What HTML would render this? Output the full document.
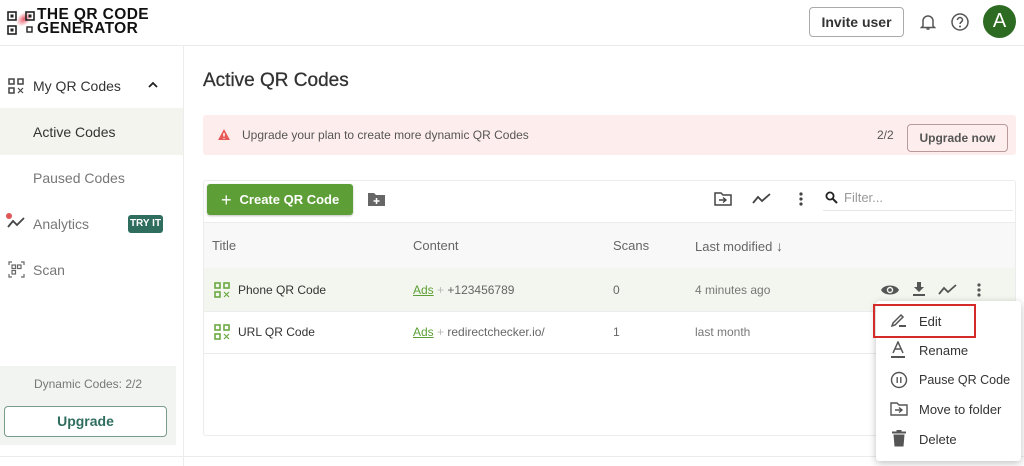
<!DOCTYPE html>
<html><head><meta charset="utf-8"><style>
*{box-sizing:border-box;margin:0;padding:0}
body{width:1024px;height:466px;overflow:hidden;background:#fff;font-family:"Liberation Sans",Arial,sans-serif;color:#333;position:relative}
.a{position:absolute}
.t{font-size:13px;white-space:nowrap}
.g{color:#666}
</style></head><body>
<!-- header -->
<div class="a" style="left:0;top:45px;width:1024px;height:1px;background:#ececec"></div>
<svg class="a" style="left:7px;top:9px" width="28" height="26" viewBox="0 0 28 26">
<defs><radialGradient id="r"><stop offset="0" stop-color="#e85a6a"/><stop offset="1" stop-color="#e85a6a" stop-opacity="0"/></radialGradient></defs>
<ellipse cx="17" cy="10" rx="9" ry="6" fill="url(#r)" transform="rotate(-40 17 10)"/>
<rect x="1" y="3" width="8" height="8" fill="none" stroke="#222" stroke-width="1.6"/><rect x="3.5" y="5.5" width="3" height="3" fill="#222"/>
<rect x="19" y="3" width="8" height="8" fill="none" stroke="#222" stroke-width="1.6"/><rect x="21.5" y="5.5" width="3" height="3" fill="#222"/>
<rect x="1" y="17" width="8" height="8" fill="none" stroke="#222" stroke-width="1.6"/><rect x="3.5" y="19.5" width="3" height="3" fill="#222"/>
<rect x="20" y="18" width="5" height="5" fill="none" stroke="#222" stroke-width="1.4"/>
</svg>
<div class="a" style="left:37px;top:8px;font-weight:bold;font-size:15.5px;line-height:14px;color:#111;letter-spacing:0.4px">THE QR CODE<br>GENERATOR</div>
<div class="a" style="left:809px;top:7px;width:95px;height:30px;border:1px solid #aaa;border-radius:4px;font-size:14px;font-weight:bold;color:#333;text-align:center;line-height:28px">Invite user</div>
<svg class="a" style="left:918px;top:12px" width="20" height="20" viewBox="0 0 20 20"><path d="M5 14V9a5 5 0 0110 0v5l1.5 1.5h-13z M8.5 17h3" fill="none" stroke="#555" stroke-width="1.5"/></svg>
<svg class="a" style="left:950px;top:12px" width="20" height="20" viewBox="0 0 20 20"><circle cx="10" cy="10" r="8" fill="none" stroke="#555" stroke-width="1.5"/><path d="M7.5 8a2.5 2.5 0 115 0c0 2-2.5 2-2.5 4" fill="none" stroke="#555" stroke-width="1.5"/><circle cx="10" cy="14.5" r="1" fill="#555"/></svg>
<div class="a" style="left:983px;top:5px;width:33px;height:33px;border-radius:50%;background:#2e6b22;color:#fff;font-size:20px;text-align:center;line-height:33px">A</div>
<!-- sidebar -->
<div class="a" style="left:183px;top:46px;width:1px;height:420px;background:#ececec"></div>
<div class="a" style="left:0;top:456px;width:1024px;height:1px;background:#ececec"></div>
<svg class="a" style="left:8px;top:78px" width="16" height="16" viewBox="0 0 16 16"><g fill="none" stroke="#444" stroke-width="1.5"><rect x="1" y="1" width="5" height="5"/><rect x="10" y="1" width="5" height="5"/><rect x="1" y="10" width="5" height="5"/></g><path d="M10 10l5 5M15 10l-5 5" stroke="#444" stroke-width="1.2"/></svg>
<div class="a t" style="left:33px;top:78px;font-size:14px;color:#333">My QR Codes</div>
<svg class="a" style="left:147px;top:80px" width="12" height="10"><path d="M2 7l4-4 4 4" fill="none" stroke="#222" stroke-width="1.8"/></svg>
<div class="a" style="left:0;top:108px;width:183px;height:47px;background:#f2f4ed"></div>
<div class="a t" style="left:33px;top:124px;font-size:14px;color:#333">Active Codes</div>
<div class="a t" style="left:33px;top:170px;font-size:14px;color:#777">Paused Codes</div>
<div class="a" style="left:6px;top:213px;width:6px;height:6px;border-radius:50%;background:#e05555"></div>
<svg class="a" style="left:7px;top:215px" width="18" height="14"><path d="M1 12l5-6 4 4 7-7" fill="none" stroke="#444" stroke-width="1.8"/></svg>
<div class="a t" style="left:33px;top:216px;font-size:14px;color:#777">Analytics</div>
<div class="a" style="left:128px;top:215px;width:35px;height:18px;border-radius:3px;background:#2f6e5f;color:#fff;font-size:10px;font-weight:bold;text-align:center;line-height:18px">TRY IT</div>
<svg class="a" style="left:8px;top:261px" width="17" height="17" viewBox="0 0 17 17"><g fill="none" stroke="#666" stroke-width="1.2"><path d="M1 4V1h3M13 1h3v3M16 13v3h-3M4 16H1v-3"/><rect x="4" y="4" width="3.5" height="3.5"/><rect x="9.5" y="4" width="3.5" height="3.5"/><rect x="4" y="9.5" width="3.5" height="3.5"/></g></svg>
<div class="a t" style="left:33px;top:262px;font-size:14px;color:#777">Scan</div>
<div class="a" style="left:0;top:366px;width:176px;height:79px;background:#f1f4f1"></div>
<div class="a t" style="left:0;top:377px;width:176px;text-align:center;font-size:12px;color:#777">Dynamic Codes: 2/2</div>
<div class="a" style="left:4px;top:406px;width:163px;height:31px;border:1px solid #7a9a8a;border-radius:4px;background:#fff;color:#2f6e5f;font-size:14px;font-weight:bold;text-align:center;line-height:29px">Upgrade</div>
<!-- main -->
<div class="a t" style="left:203px;top:70px;font-size:19px;color:#333;-webkit-text-stroke:0.3px #333">Active QR Codes</div>
<div class="a" style="left:203px;top:115px;width:813px;height:40px;background:#fdeeed;border-radius:3px"></div>
<svg class="a" style="left:217px;top:128px" width="14" height="13"><path d="M7 1l6 11H1z" fill="#e85a5a"/><path d="M7 5v3.5M7 10v.8" stroke="#fff" stroke-width="1.4"/></svg>
<div class="a t" style="left:242px;top:128px;font-size:12px;color:#555">Upgrade your plan to create more dynamic QR Codes</div>
<div class="a t" style="left:877px;top:128px;font-size:12px;color:#555">2/2</div>
<div class="a" style="left:907px;top:124px;width:101px;height:28px;border:1px solid #b89a9a;border-radius:4px;font-size:12px;font-weight:bold;color:#555;text-align:center;line-height:26px">Upgrade now</div>
<!-- card -->
<div class="a" style="left:203px;top:180px;width:813px;height:256px;border:1px solid #ececec;border-radius:3px"></div>
<div class="a" style="left:207px;top:184px;width:146px;height:31px;background:#5d9e36;border-radius:3px;box-shadow:0 1px 2px rgba(0,0,0,.25);color:#fff;font-size:13px;font-weight:bold;line-height:31px;padding-left:14px"><span style="font-size:18px;font-weight:normal;vertical-align:-2px;margin-right:8px">+</span>Create QR Code</div>
<svg class="a" style="left:368px;top:192px" width="17" height="14"><path d="M0 1h6l2 2h9v11H0z" fill="#666"/><path d="M8.5 6v6M5.5 9h6" stroke="#fff" stroke-width="1.5"/></svg>
<svg class="a" style="left:714px;top:192px" width="18" height="14"><path d="M1 1h6l2 2h8v10H1z" fill="none" stroke="#444" stroke-width="1.5"/><path d="M5 8h7M9 5.5L12 8l-3 2.5" fill="none" stroke="#444" stroke-width="1.4"/></svg>
<svg class="a" style="left:752px;top:193px" width="20" height="12"><path d="M1 10l5-6 4 4 8-7" fill="none" stroke="#444" stroke-width="1.8"/></svg>
<svg class="a" style="left:798px;top:191px" width="6" height="16"><circle cx="3" cy="3" r="1.6" fill="#444"/><circle cx="3" cy="8" r="1.6" fill="#444"/><circle cx="3" cy="13" r="1.6" fill="#444"/></svg>
<svg class="a" style="left:825px;top:191px" width="13" height="13"><circle cx="5" cy="5" r="3.6" fill="none" stroke="#222" stroke-width="1.8"/><path d="M7.8 7.8L12 12" stroke="#222" stroke-width="2"/></svg>
<div class="a t" style="left:844px;top:190px;color:#999">Filter...</div>
<div class="a" style="left:823px;top:210px;width:190px;height:1px;background:#e6e6e6"></div>
<div class="a" style="left:204px;top:222px;width:811px;height:1px;background:#ececec"></div>
<div class="a" style="left:204px;top:223px;width:811px;height:45px;background:#f7f8f7"></div>
<div class="a t g" style="left:212px;top:238px">Title</div>
<div class="a t g" style="left:413px;top:238px">Content</div>
<div class="a t g" style="left:613px;top:238px">Scans</div>
<div class="a t g" style="left:695px;top:238px">Last modified <span style="font-size:14px">↓</span></div>
<div class="a" style="left:204px;top:268px;width:811px;height:43px;background:#f3f6ee"></div>
<div class="a" style="left:204px;top:311px;width:811px;height:1px;background:#ececec"></div>
<div class="a" style="left:204px;top:353px;width:811px;height:1px;background:#ececec"></div>
<svg class="a" style="left:214px;top:282px" width="16" height="16" viewBox="0 0 16 16"><g fill="none" stroke="#6aa842" stroke-width="1.6"><rect x="1" y="1" width="5" height="5"/><rect x="10" y="1" width="5" height="5"/><rect x="1" y="10" width="5" height="5"/></g><path d="M10 10l5 5M15 10l-5 5" stroke="#6aa842" stroke-width="1.2"/></svg>
<div class="a t" style="left:238px;top:283px;font-size:12px;color:#333">Phone QR Code</div>
<div class="a t" style="left:413px;top:283px;font-size:12px;color:#666"><span style="color:#5d9e36;text-decoration:underline">Ads</span> <span style="color:#bbb">+</span> +123456789</div>
<div class="a t" style="left:613px;top:283px;font-size:12px;color:#666">0</div>
<div class="a t" style="left:695px;top:283px;font-size:12px;color:#777">4 minutes ago</div>
<svg class="a" style="left:880px;top:283px" width="20" height="14"><path d="M1 7C4 1 16 1 19 7C16 13 4 13 1 7z" fill="#555"/><circle cx="10" cy="7" r="3.2" fill="#f3f6ee"/><circle cx="10" cy="7" r="1.8" fill="#555"/></svg>
<svg class="a" style="left:912px;top:281px" width="14" height="16"><path d="M5 1h4v5h3l-5 5-5-5h3z" fill="#555"/><rect x="1" y="13" width="12" height="2" fill="#555"/></svg>
<svg class="a" style="left:938px;top:284px" width="20" height="12"><path d="M1 10l5-6 4 4 8-7" fill="none" stroke="#555" stroke-width="1.8"/></svg>
<svg class="a" style="left:976px;top:282px" width="6" height="16"><circle cx="3" cy="3" r="1.6" fill="#555"/><circle cx="3" cy="8" r="1.6" fill="#555"/><circle cx="3" cy="13" r="1.6" fill="#555"/></svg>
<svg class="a" style="left:214px;top:324px" width="16" height="16" viewBox="0 0 16 16"><g fill="none" stroke="#6aa842" stroke-width="1.6"><rect x="1" y="1" width="5" height="5"/><rect x="10" y="1" width="5" height="5"/><rect x="1" y="10" width="5" height="5"/></g><path d="M10 10l5 5M15 10l-5 5" stroke="#6aa842" stroke-width="1.2"/></svg>
<div class="a t" style="left:238px;top:325px;font-size:12px;color:#333">URL QR Code</div>
<div class="a t" style="left:413px;top:325px;font-size:12px;color:#666"><span style="color:#5d9e36;text-decoration:underline">Ads</span> <span style="color:#bbb">+</span> redirectchecker.io/</div>
<div class="a t" style="left:613px;top:325px;font-size:12px;color:#666">1</div>
<div class="a t" style="left:695px;top:325px;font-size:12px;color:#777">last month</div>
<!-- menu -->
<div class="a" style="left:876px;top:301px;width:145px;height:160px;background:#fff;border-radius:3px;box-shadow:0 2px 8px rgba(0,0,0,.25)"></div>
<div class="a" style="left:873px;top:304px;width:103px;height:34px;border:2.5px solid #d42a2a"></div>
<svg class="a" style="left:890px;top:313px" width="18" height="16"><path d="M2 13l1-3 8-8 2 2-8 8z" fill="none" stroke="#555" stroke-width="1.5"/><path d="M9 13h7" stroke="#555" stroke-width="2"/></svg>
<div class="a t" style="left:919px;top:314px;font-size:13px;color:#333">Edit</div>
<svg class="a" style="left:890px;top:341px" width="16" height="19"><path d="M3 12L8 1l5 11M5 8h6" fill="none" stroke="#555" stroke-width="1.5"/><rect x="1" y="15" width="14" height="2" fill="#555"/></svg>
<div class="a t" style="left:919px;top:343px;font-size:13px;color:#333">Rename</div>
<svg class="a" style="left:890px;top:371px" width="18" height="18"><circle cx="9" cy="9" r="7.5" fill="none" stroke="#555" stroke-width="1.4"/><path d="M7.2 6v6M10.8 6v6" stroke="#555" stroke-width="1.4"/></svg>
<div class="a t" style="left:919px;top:373px;font-size:12.5px;color:#333">Pause QR Code</div>
<svg class="a" style="left:890px;top:402px" width="18" height="14"><path d="M1 1h6l2 2h8v10H1z" fill="none" stroke="#555" stroke-width="1.4"/><path d="M5 8h7M9 5.5L12 8l-3 2.5" fill="none" stroke="#555" stroke-width="1.4"/></svg>
<div class="a t" style="left:919px;top:402px;font-size:13px;color:#333">Move to folder</div>
<svg class="a" style="left:892px;top:430px" width="14" height="17"><rect x="0" y="1.5" width="14" height="2" fill="#555"/><rect x="4.5" y="0" width="5" height="2" fill="#555"/><path d="M1.5 4.5h11l-1 12h-9z" fill="#555"/></svg>
<div class="a t" style="left:919px;top:432px;font-size:13px;color:#333">Delete</div>
</body></html>
